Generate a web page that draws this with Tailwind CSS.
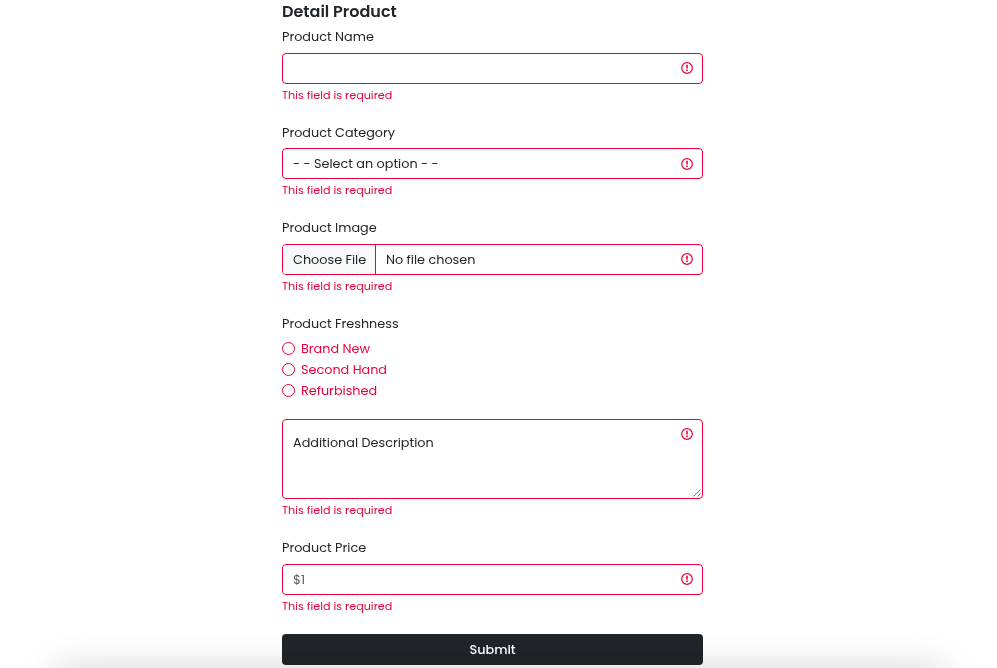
<!DOCTYPE html>
<html lang="en">
<head>
<meta charset="utf-8">
<title>Detail Product</title>
<script src="https://cdn.jsdelivr.net/npm/@tailwindcss/browser@4"></script>
</head>
<body class="bg-white font-[Poppins,Inter,sans-serif] text-[12.8px] leading-5 text-[#212529] antialiased">
<svg class="hidden">
  <symbol id="alert" viewBox="0 0 12 12">
    <circle cx="6" cy="6" r="5.3" fill="none" stroke="#eb003b" stroke-width="1.2"/>
    <path d="M6 2.8V6.6" stroke="#eb003b" stroke-width="1.6"/>
    <path d="M6 7.6V9.1" stroke="#eb003b" stroke-width="1.6"/>
  </symbol>
</svg>
<main class="relative h-[668px] overflow-hidden">
<form class="ml-[282px] w-[421px] will-change-transform">
  <h1 class="h-[27px] pt-px text-base leading-[22px] font-semibold">Detail Product</h1>

  <div class="h-[95px]">
    <label class="block h-[26px]">Product Name</label>
    <div class="flex h-[31px] items-start justify-end rounded border border-[#eb003b] px-[9px] pt-2"><svg class="size-3"><use href="#alert"/></svg></div>
    <p class="mt-[3px] text-[11.2px] leading-4 text-[#eb003b]">This field is required</p>
  </div>

  <div class="h-24">
    <label class="block h-[26px] pt-px">Product Category</label>
    <div class="flex h-[31px] items-center justify-between rounded border border-[#eb003b] pr-[9px] pl-[10px]"><span>- - Select an option - -</span><svg class="size-3"><use href="#alert"/></svg></div>
    <p class="mt-[3px] text-[11.2px] leading-4 text-[#eb003b]">This field is required</p>
  </div>

  <div class="h-24">
    <label class="block h-[26px]">Product Image</label>
    <div class="flex h-[31px] items-center overflow-hidden rounded border border-[#eb003b] pr-[9px]"><div class="flex h-full w-[93px] shrink-0 items-center border-r border-[#eb003b] bg-[#f8f9fa] pl-[10px] whitespace-nowrap">Choose File</div><div class="flex-1 pl-[10px]">No file chosen</div><svg class="mb-px size-3"><use href="#alert"/></svg></div>
    <p class="mt-[3px] text-[11.2px] leading-4 text-[#eb003b]">This field is required</p>
  </div>

  <div class="h-[105px]">
    <div class="h-6">Product Freshness</div>
    <div class="text-[#eb003b]">
      <div class="flex h-[21px] items-center gap-[6px]"><i class="size-[13px] rounded-full border border-[#eb003b]"></i><span>Brand New</span></div>
      <div class="flex h-[21px] items-center gap-[6px]"><i class="size-[13px] rounded-full border border-[#eb003b]"></i><span>Second Hand</span></div>
      <div class="flex h-[21px] items-center gap-[6px]"><i class="size-[13px] rounded-full border border-[#eb003b]"></i><span>Refurbished</span></div>
    </div>
  </div>

  <div class="h-[119px]">
    <div class="relative flex h-20 items-start justify-between rounded border border-[#eb003b] pr-[9px] pl-[10px]"><span class="mt-[13px]">Additional Description</span><svg class="mt-2 size-3"><use href="#alert"/></svg>
      <svg class="absolute right-[1px] bottom-[1px] size-2" viewBox="0 0 8 8"><path d="M.5 7.5l7-7M4.5 7.5l3-3" stroke="#555" stroke-width=".8"/></svg>
    </div>
    <p class="mt-[3px] text-[11.2px] leading-4 text-[#eb003b]">This field is required</p>
  </div>

  <div class="h-24">
    <label class="block h-[26px]">Product Price</label>
    <div class="flex h-[31px] items-center justify-between rounded border border-[#eb003b] pr-[9px] pl-[10px]"><span class="text-[#595c5f]">$1</span><svg class="mb-px size-3"><use href="#alert"/></svg></div>
    <p class="mt-[3px] text-[11.2px] leading-4 text-[#eb003b]">This field is required</p>
  </div>

  <button type="button" class="block h-[31px] w-full rounded bg-[#212529] font-medium text-white">Submit</button>
</form>
<div class="pointer-events-none absolute top-[671px] right-[54px] left-[56px] h-40 shadow-[0_0_36px_rgba(0,0,0,0.2)]"></div>
</main>
</body>
</html>
